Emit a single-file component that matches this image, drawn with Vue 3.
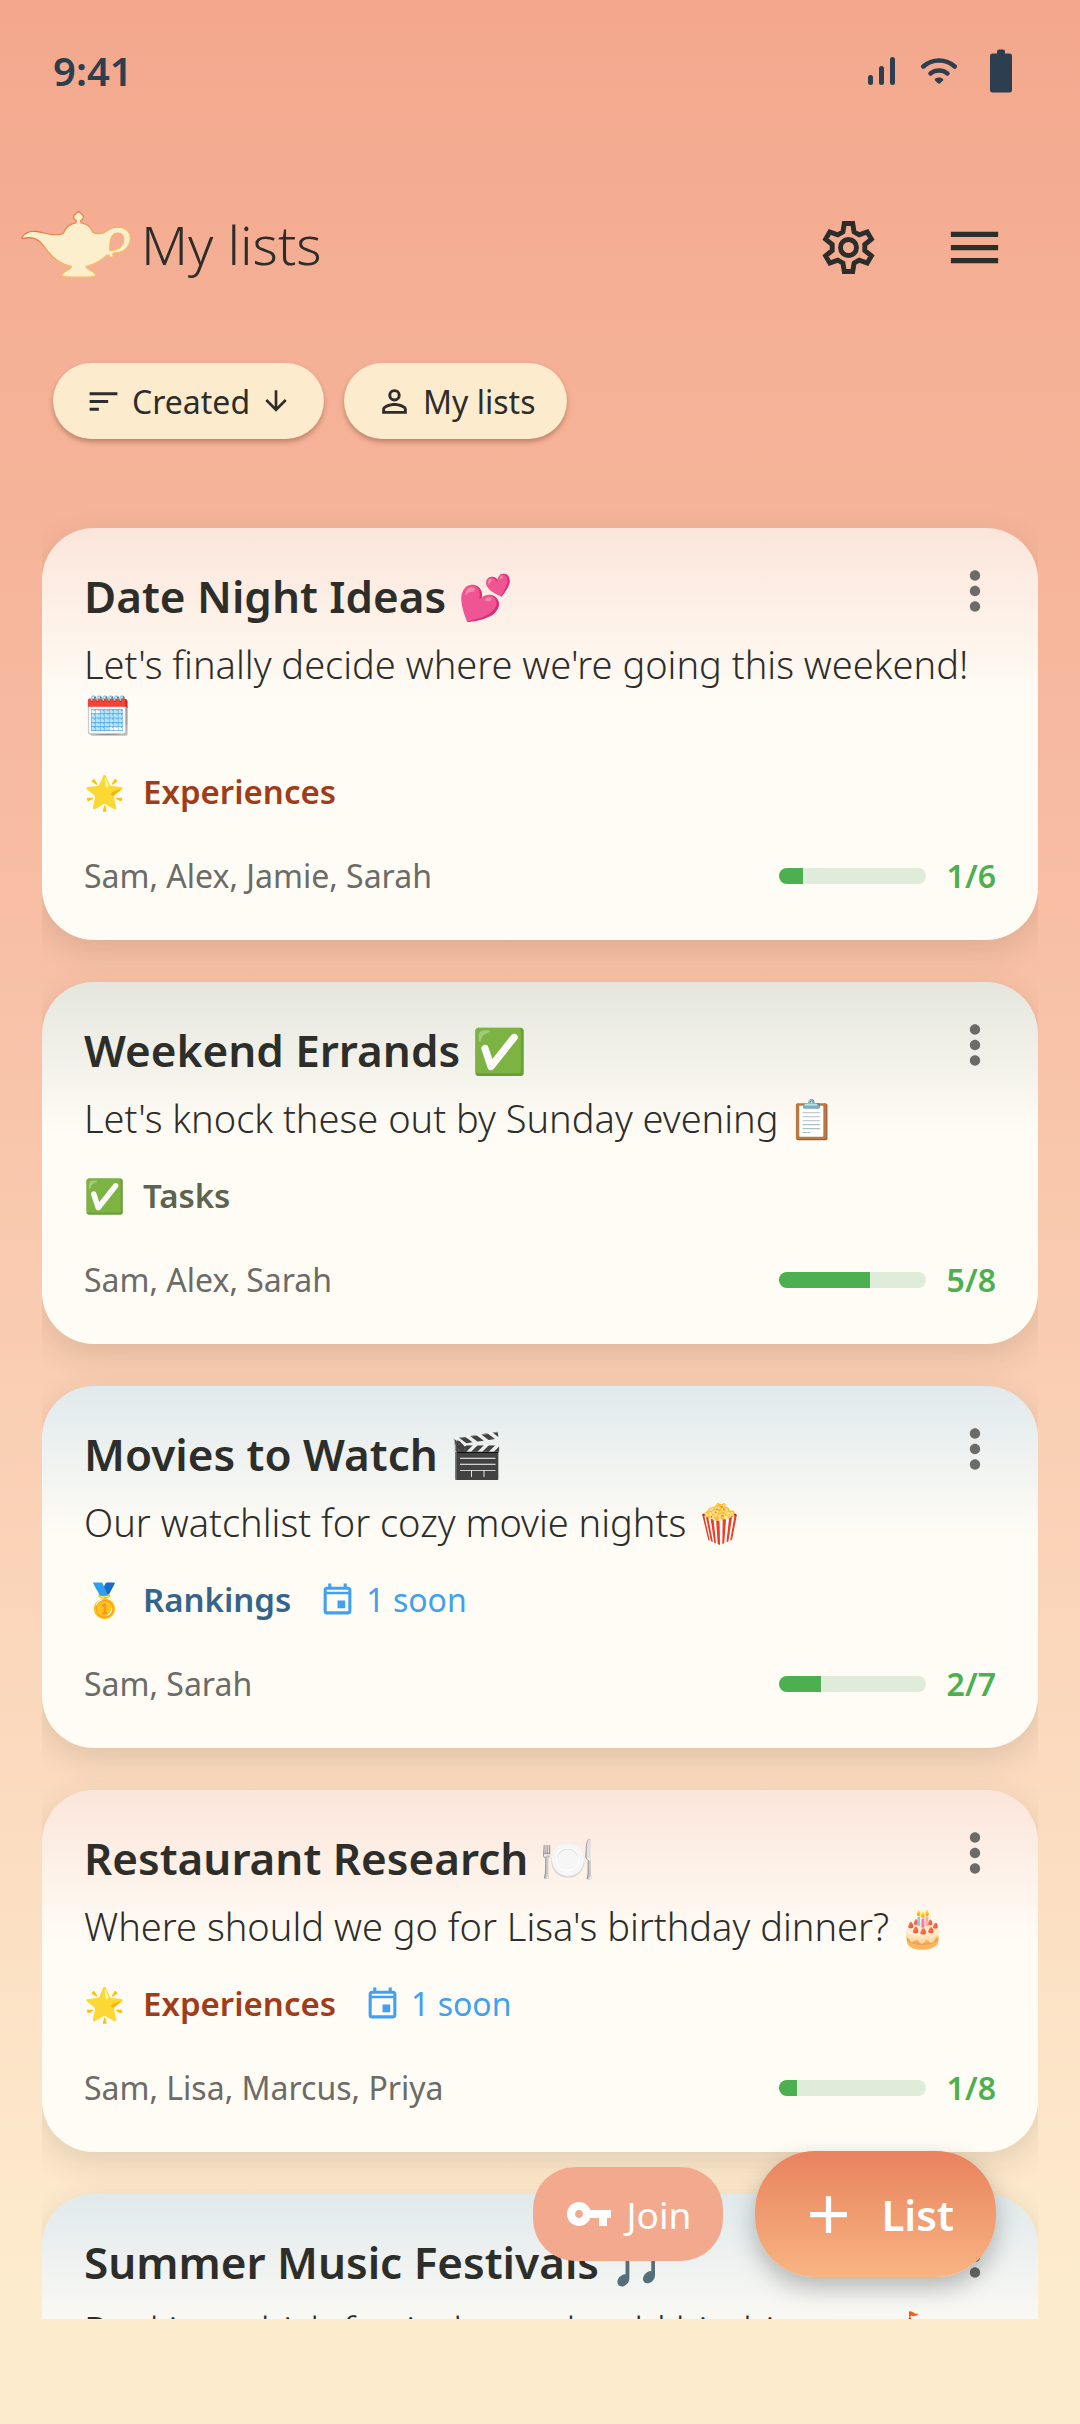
<script setup>
const lists = [
  {
    title: 'Date Night Ideas 💕',
    description: "Let's finally decide where we're going this weekend! 🗓️",
    kind: 'experiences',
    emoji: '🌟',
    label: 'Experiences',
    soon: 0,
    members: ['Sam', 'Alex', 'Jamie', 'Sarah'],
    done: 1,
    total: 6,
  },
  {
    title: 'Weekend Errands ✅',
    description: "Let's knock these out by Sunday evening 📋",
    kind: 'tasks',
    emoji: '✅',
    label: 'Tasks',
    soon: 0,
    members: ['Sam', 'Alex', 'Sarah'],
    done: 5,
    total: 8,
  },
  {
    title: 'Movies to Watch 🎬',
    description: 'Our watchlist for cozy movie nights 🍿',
    kind: 'rankings',
    emoji: '🥇',
    label: 'Rankings',
    soon: 1,
    members: ['Sam', 'Sarah'],
    done: 2,
    total: 7,
  },
  {
    title: 'Restaurant Research 🍽️',
    description: "Where should we go for Lisa's birthday dinner? 🎂",
    kind: 'experiences',
    emoji: '🌟',
    label: 'Experiences',
    soon: 1,
    members: ['Sam', 'Lisa', 'Marcus', 'Priya'],
    done: 1,
    total: 8,
  },
  {
    title: 'Summer Music Festivals 🎵',
    description: 'Ranking which festivals we should hit this year 🎪',
    kind: 'rankings',
    emoji: '🥇',
    label: 'Rankings',
    soon: 0,
    members: ['Sam', 'Alex'],
    done: 3,
    total: 9,
  },
]

const percent = (list) => `${(list.done / list.total) * 100}%`
</script>

<template>
  <div class="app">
    <div class="status">
      <span class="time">9:41</span>
      <div class="signals">
        <svg width="28" height="28" viewBox="0 0 28 28" aria-hidden="true">
          <rect x="0" y="18" width="5" height="10" rx="2.5" />
          <rect x="11" y="9" width="5" height="19" rx="2.5" />
          <rect x="22" y="0" width="5" height="28" rx="2.5" />
        </svg>
        <svg class="wifi" width="36" height="28" viewBox="0 0 36 28" aria-hidden="true">
          <path class="arc" d="M2.3 9.5a23.4 23.4 0 0 1 31.4 0" />
          <path class="arc" d="M9.5 16.5a14 14 0 0 1 17 0" />
          <path d="M18 20.5c1.8 0 3.2.6 4 1.4.5.6.3 1.3-.3 1.9l-2.5 2.4c-.7.6-1.7.6-2.4 0l-2.5-2.4c-.6-.6-.8-1.3-.3-1.9.8-.8 2.2-1.4 4-1.4z" />
        </svg>
        <svg width="22" height="44" viewBox="0 0 22 44" aria-hidden="true">
          <path d="M7 4.500V2.500a2 2 0 0 1 2-2h4a2 2 0 0 1 2 2v2h4.500A2.500 2.500 0 0 1 22 7v34a2.500 2.500 0 0 1-2.500 2.500h-17A2.500 2.500 0 0 1 0 41V7a2.500 2.500 0 0 1 2.500-2.500z" />
        </svg>
      </div>
    </div>

    <header class="appbar">
      <div class="brand">
        <svg width="110" height="68" viewBox="0 -1 110 68" aria-hidden="true">
          <defs>
            <linearGradient id="lamp-edge" x1="0" y1="0" x2="1" y2="1">
              <stop offset="0.2" stop-color="#e8683f" />
              <stop offset="0.6" stop-color="#f3b95a" />
              <stop offset="1" stop-color="#f6d27c" />
            </linearGradient>
          </defs>
          <path
            fill-rule="evenodd"
            fill="#fcefcd"
            stroke="url(#lamp-edge)"
            stroke-width="1.2"
            d="M.8 26.500C4 22 9 20 14 20.300c6 .3 11 2.800 17 3.300 5 .4 9 .2 11.500-1.600C44.500 17 49 12.700 55 11.800l.3-2.300C52.500 8.500 52 5.800 53.500 3.800 54.800 2.500 56.500 1.500 57.500.3c1 1.200 2.700 2.200 4 3.500 1.500 2 1 4.700-1.800 5.700l.3 2.300c6 .9 10 4.200 11.500 9.200 2.500 2 7.500 2.300 11.500.6 4-2.600 7.500-5.500 13.500-5.500 7.500 0 12.800 4.500 12.800 11 0 8-6.300 14.600-14.300 14.600-1.800 0-2.800.4-3.600 1.400 1.200 1 .8 3.200-1 3.200-1.600 0-2-.8-2.200-2-1-.5-1.700-.3-2.600-.1-5 5.300-11.600 8.800-20.600 11.200.5 4 9.400 4.600 9.400 8.800 0 1.200-7 1.900-16.700 1.900S41 65.400 41 64.200c0-4.200 8.900-4.800 9.400-8.800C36 52.500 28.500 43 22 34 17 27.300 10 25.500 1.800 27.500c-1 0-1.300-.5-1-1zM88.800 39.500c8 .6 14-4 14-11.500 0-3.600-2.400-6-6-6-6.600 0-8.500 7.500-8 17.500z"
          />
        </svg>
        <h1>My lists</h1>
      </div>
      <nav class="actions">
        <button type="button" aria-label="Settings">
          <svg width="63" height="63" viewBox="-31.5 -31.5 63 63" aria-hidden="true">
            <g fill="none" stroke="currentColor" stroke-width="4.9">
              <path d="M-4.200-24 4.200-24 5.600-15.600 10.700-12.700 18.700-15.600 22.900-8.400 16.300-3 16.300 3 22.900 8.400 18.700 15.600 10.700 12.700 5.600 15.600 4.200 24-4.200 24-5.600 15.600-10.700 12.700-18.700 15.600-22.900 8.400-16.300 3-16.300-3-22.900-8.400-18.700-15.600-10.700-12.700-5.600-15.600z" />
              <circle r="8" />
            </g>
          </svg>
        </button>
        <button type="button" aria-label="Menu">
          <svg width="63" height="63" viewBox="0 0 24 24" aria-hidden="true">
            <path d="M3 18h18v-2H3v2zm0-5h18v-2H3v2zm0-7v2h18V6H3z" />
          </svg>
        </button>
      </nav>
    </header>

    <div class="chips">
      <button type="button" class="chip">
        <svg width="37" height="37" viewBox="0 0 24 24" aria-hidden="true">
          <path d="M3 18h6v-2H3v2zM3 6v2h18V6H3zm0 7h12v-2H3v2z" />
        </svg>
        Created
        <svg width="32" height="32" viewBox="0 0 24 24" aria-hidden="true">
          <path d="m20 12-1.410-1.410L13 16.170V4h-2v12.170l-5.580-5.590L4 12l8 8 8-8z" />
        </svg>
      </button>
      <button type="button" class="chip">
        <svg width="37" height="37" viewBox="0 0 24 24" aria-hidden="true">
          <path d="M12 5.900a2.100 2.100 0 1 1 0 4.200 2.100 2.100 0 0 1 0-4.200m0 9c2.970 0 6.100 1.460 6.100 2.100v1.100H5.900V17c0-.64 3.130-2.100 6.100-2.100M12 4C9.790 4 8 5.790 8 8s1.790 4 4 4 4-1.790 4-4-1.790-4-4-4zm0 9c-2.670 0-8 1.340-8 4v3h16v-3c0-2.660-5.330-4-8-4z" />
        </svg>
        My lists
      </button>
    </div>

    <main class="lists">
      <article v-for="list in lists" :key="list.title" class="card" :class="list.kind">
        <div class="card-head">
          <h2>{{ list.title }}</h2>
          <button type="button" class="more" :aria-label="`Options for ${list.title}`">
            <svg width="62" height="62" viewBox="0 0 24 24" aria-hidden="true">
              <path d="M12 8c1.100 0 2-.9 2-2s-.9-2-2-2-2 .9-2 2 .9 2 2 2zm0 2c-1.100 0-2 .9-2 2s.9 2 2 2 2-.9 2-2-.9-2-2-2zm0 6c-1.100 0-2 .9-2 2s.9 2 2 2 2-.9 2-2-.9-2-2-2z" />
            </svg>
          </button>
        </div>
        <p class="description">{{ list.description }}</p>
        <div class="tags">
          <span class="emoji">{{ list.emoji }}</span>
          <span class="label">{{ list.label }}</span>
          <span v-if="list.soon" class="soon">
            <svg width="37" height="37" viewBox="0 0 24 24" aria-hidden="true">
              <path d="M17 12h-5v5h5v-5zM16 1v2H8V1H6v2H5c-1.110 0-1.990.9-1.990 2L3 19a2 2 0 0 0 2 2h14c1.100 0 2-.9 2-2V5c0-1.100-.9-2-2-2h-1V1h-2zm3 18H5V8h14v11zM5 5h14v1.400H5z" fill-rule="evenodd" />
            </svg>
            {{ list.soon }} soon
          </span>
        </div>
        <div class="foot">
          <span class="members">{{ list.members.join(', ') }}</span>
          <div
            class="track"
            role="progressbar"
            aria-valuemin="0"
            :aria-valuenow="list.done"
            :aria-valuemax="list.total"
            :aria-label="`${list.title} progress`"
          >
            <div class="fill" :style="{ width: percent(list) }"></div>
          </div>
          <span class="count">{{ list.done }}/{{ list.total }}</span>
        </div>
      </article>
    </main>

    <div class="floating">
      <button type="button" class="join">
        <svg width="48" height="48" viewBox="0 0 24 24" aria-hidden="true">
          <path d="M12.650 10C11.830 7.670 9.610 6 7 6c-3.310 0-6 2.690-6 6s2.690 6 6 6c2.610 0 4.830-1.670 5.650-4H17v4h4v-4h2v-4H12.650zM7 14c-1.100 0-2-.9-2-2s.9-2 2-2 2 .9 2 2-.9 2-2 2z" />
        </svg>
        Join
      </button>
      <button type="button" class="create">
        <svg width="63" height="63" viewBox="0 0 24 24" aria-hidden="true">
          <path d="M19 13h-6v6h-2v-6H5v-2h6V5h2v6h6v2z" />
        </svg>
        List
      </button>
    </div>
  </div>
</template>

<style>
body {
  margin: 0;
}
</style>

<style scoped>
.app {
  position: relative;
  box-sizing: border-box;
  display: flex;
  flex-direction: column;
  height: 100vh;
  padding-bottom: 105px;
  overflow: hidden;
  background: linear-gradient(#f3a88d, #f7bba1 33%, #fdebce 94%);
  color: #2d2d2a;
  font-family: "Noto Sans", "Open Sans", sans-serif;
}

svg {
  display: block;
  flex: none;
  fill: currentColor;
}

button {
  display: flex;
  align-items: center;
  padding: 0;
  border: 0;
  background: none;
  color: inherit;
  font-family: inherit;
}

.status {
  display: flex;
  flex: none;
  align-items: center;
  justify-content: space-between;
  height: 142px;
  padding: 0 68px 0 53px;
  color: #2c3e50;
}

.time {
  font-size: 40px;
  font-weight: 600;
  line-height: 50px;
}

.signals {
  display: flex;
  align-items: center;
  gap: 25px;
}

.wifi {
  margin-right: 8px;
}

.arc {
  fill: none;
  stroke: currentColor;
  stroke-width: 4.5;
  stroke-linecap: round;
}

.appbar {
  display: flex;
  flex: none;
  align-items: center;
  height: 146px;
  margin-top: 32px;
  padding: 0 74px 0 21px;
}

.brand {
  display: flex;
  align-items: center;
  gap: 10px;
  padding-bottom: 6px;
}

h1 {
  margin: 0;
  font-size: 54px;
  font-weight: 300;
}

.actions {
  display: flex;
  gap: 63px;
  margin-left: auto;
}

.chips {
  display: flex;
  flex: none;
  gap: 20px;
  margin-top: 43px;
  padding: 0 53px;
}

.chip {
  gap: 10px;
  height: 76px;
  padding: 0 32px;
  border-radius: 38px;
  background: #fdebce;
  box-shadow: 0 3px 5px rgba(90, 40, 20, 0.35);
  font-size: 32px;
}

.lists {
  display: flex;
  flex: 1;
  flex-direction: column;
  gap: 42px;
  min-height: 0;
  margin: 21px 42px 0;
  padding-top: 68px;
  overflow: hidden;
}

.card {
  --tint: #fbe5da;
  --accent: #a03c18;
  flex: none;
  padding: 43px 42px 42px;
  border-radius: 52px;
  background: linear-gradient(var(--tint), #fffcf5 42%);
  box-shadow: 0 10px 32px rgba(60, 50, 20, 0.14);
}

.tasks {
  --tint: #e4e6dd;
  --accent: #5b6351;
}

.rankings {
  --tint: #e0e9ec;
  --accent: #33658a;
}

.card-head {
  display: flex;
  align-items: flex-start;
  justify-content: space-between;
}

h2 {
  margin: 0;
  font-size: 44px;
  font-weight: 600;
  line-height: 50px;
}

.more {
  margin: -11px -10px -10px 0;
  color: #6b6b67;
}

.description {
  margin: 18px 0 0;
  font-size: 38px;
  font-weight: 300;
  line-height: 50px;
}

.tags {
  display: flex;
  align-items: center;
  margin-top: 31px;
  line-height: 44px;
}

.emoji {
  margin-right: 18px;
  font-size: 33px;
}

.label {
  color: var(--accent);
  font-size: 33px;
  font-weight: 600;
}

.soon {
  display: flex;
  align-items: center;
  gap: 10px;
  margin-left: 28px;
  color: #42a0f0;
  font-size: 32px;
}

.foot {
  display: flex;
  align-items: center;
  margin-top: 40px;
  line-height: 44px;
}

.members {
  flex: 1;
  color: #6b6b67;
  font-size: 32px;
}

.track {
  width: 147px;
  height: 16px;
  overflow: hidden;
  border-radius: 8px;
  background: #dfecd9;
}

.fill {
  height: 100%;
  background: #4caf50;
}

.count {
  margin-left: 21px;
  color: #4caf50;
  font-size: 32px;
  font-weight: 600;
}

.floating {
  position: absolute;
  right: 84px;
  bottom: 147px;
  display: flex;
  align-items: center;
  gap: 32px;
  color: #fff;
}

.join {
  gap: 14px;
  height: 94px;
  padding: 0 32px;
  border-radius: 42px;
  background: #f3a98d;
  font-size: 37px;
}

.create {
  gap: 21px;
  height: 126px;
  padding: 0 42px;
  border-radius: 60px;
  background: linear-gradient(#e8825e, #f8b482);
  box-shadow: 0 10px 24px rgba(0, 0, 0, 0.26);
  font-size: 42px;
  font-weight: 600;
}
</style>
